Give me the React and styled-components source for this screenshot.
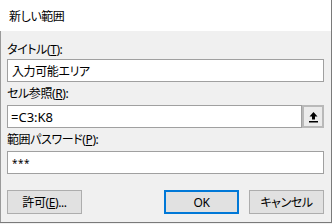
import styled, { createGlobalStyle } from "styled-components";

const GlobalStyle = createGlobalStyle`
  html, body {
    margin: 0;
    padding: 0;
    background: #f0f0f0;
  }
  body {
    font-family: "Noto Sans", "Noto Sans CJK JP", sans-serif;
    font-size: 12px;
    font-feature-settings: "palt";
    letter-spacing: -0.4px;
    color: #000;
  }
`;

const Dialog = styled.div`
  width: 331px;
  height: 222px;
  border-right: 1px solid #7a7a7a;
  border-bottom: 1px solid #7a7a7a;
  background: #f0f0f0;
  display: flex;
  flex-direction: column;
`;

const TitleBar = styled.div`
  height: 31px;
  background: #fff;
  display: flex;
  align-items: center;
  padding-left: 9px;
  font-size: 12px;
`;

const Body = styled.div`
  flex: 1;
  border-left: 1px solid #9a9a9a;
  padding: 10px 7px 0 6px;
  display: flex;
  flex-direction: column;
`;

const Label = styled.div`
  height: 16px;
  line-height: 16px;
  margin-top: ${(p) => p.$top || 4}px;
  white-space: nowrap;
`;

const FieldRow = styled.div`
  display: flex;
  margin-top: ${(p) => p.$gap || 3}px;
`;

const Input = styled.div`
  flex: 1;
  height: 21px;
  border: 1px solid #a0a0a0;
  background: #fff;
  display: flex;
  align-items: center;
  padding-left: ${(p) => p.$pad || 4}px;
  font-size: ${(p) => p.$size || 12}px;
  letter-spacing: ${(p) => p.$spacing ?? -0.4}px;
`;

const RefButton = styled.div`
  width: 18px;
  height: 19px;
  border: 2px solid #b9b9b9;
  background: #ebebeb;
  display: flex;
  align-items: center;
  justify-content: center;
`;

const ButtonRow = styled.div`
  display: flex;
  margin-top: 16px;
  gap: 10px;
`;

const Button = styled.div`
  width: ${(p) => (p.$primary ? 71 : 73)}px;
  height: ${(p) => (p.$primary ? 20 : 22)}px;
  border: ${(p) => (p.$primary ? "2px solid #0078d7" : "1px solid #adadad")};
  background: #e1e1e1;
  display: flex;
  align-items: center;
  justify-content: center;
  font-size: 12px;
`;

const Spacer = styled.div`
  flex: 1;
`;

function UpArrow() {
  return (
    <svg width="11" height="12" viewBox="0 0 11 12">
      <path d="M5.5 1 L9.5 5.5 L7 5.5 L7 8.5 L4 8.5 L4 5.5 L1.5 5.5 Z" fill="#000" />
      <rect x="1" y="10" width="9" height="1.5" fill="#000" />
    </svg>
  );
}

export default function App() {
  return (
    <>
      <GlobalStyle />
      <Dialog>
        <TitleBar>新しい範囲</TitleBar>
        <Body>
          <Label $top={1}>
            タイトル(<u>T</u>):
          </Label>
          <FieldRow $gap={1}>
            <Input>入力可能エリア</Input>
          </FieldRow>
          <Label>
            セル参照(<u>R</u>):
          </Label>
          <FieldRow>
            <Input $pad={3} $size={13} $spacing={0}>
              =C3:K8
            </Input>
            <RefButton>
              <UpArrow />
            </RefButton>
          </FieldRow>
          <Label>
            範囲パスワード(<u>P</u>):
          </Label>
          <FieldRow>
            <Input $pad={4} $size={10} $spacing={0.5}>
              ***
            </Input>
          </FieldRow>
          <ButtonRow>
            <Button>
              許可(<u>E</u>)...
            </Button>
            <Spacer />
            <Button $primary>OK</Button>
            <Button>キャンセル</Button>
          </ButtonRow>
        </Body>
      </Dialog>
    </>
  );
}
